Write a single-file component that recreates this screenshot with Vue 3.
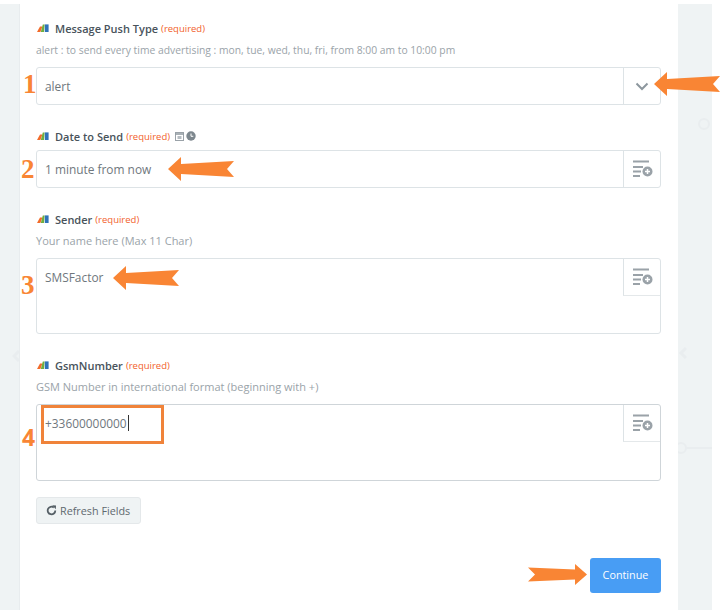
<script setup>
</script>

<template>
  <div class="page">
    <div class="backdrop">
      <span class="node node-a"></span>
      <span class="node node-b"></span>
      <span class="link"></span>
      <svg class="chev chev-l" width="8" height="12" viewBox="0 0 8 12"><path d="M7 1 2 6l5 5" fill="none" stroke="#e9edef" stroke-width="3"/></svg>
      <svg class="chev chev-r" width="9" height="12" viewBox="0 0 9 12"><path d="M8 1 3 6l5 5" fill="none" stroke="#e9edef" stroke-width="3"/></svg>
      <main class="card">
        <section class="field f1">
          <div class="label">
            <svg class="logo" viewBox="0 0 12 8"><path d="M0 8 3 2.500H5.400L3.400 8Z" fill="#f26b2a"/><path d="M3.800 8 5.800 .6H7.600L7 8Z" fill="#6fae3f"/><rect x="7.800" y=".4" width="3.800" height="7.600" fill="#2f73b8"/></svg>
            <b>Message Push Type</b><em>(required)</em>
          </div>
          <p class="help narrow">alert : to send every time advertising : mon, tue, wed, thu, fri, from 8:00 am to 10:00 pm</p>
          <div class="input single">
            <span class="value">alert</span>
            <span class="addon">
              <svg width="14" height="9" viewBox="0 0 14 9"><path d="M1.500 1.500 7 7l5.500-5.500" fill="none" stroke="#8d979e" stroke-width="2"/></svg>
            </span>
          </div>
        </section>

        <section class="field f2">
          <div class="label">
            <svg class="logo" viewBox="0 0 12 8"><path d="M0 8 3 2.500H5.400L3.400 8Z" fill="#f26b2a"/><path d="M3.800 8 5.800 .6H7.600L7 8Z" fill="#6fae3f"/><rect x="7.800" y=".4" width="3.800" height="7.600" fill="#2f73b8"/></svg>
            <b>Date to Send</b><em>(required)</em>
            <svg class="mini" width="10" height="10" viewBox="0 0 10 10"><rect x=".5" y="1.500" width="8" height="8" fill="none" stroke="#9aa2a8"/><path d="M.5 3h8" stroke="#8d979e" stroke-width="1.500"/><rect x="2.500" y="5" width="4" height="3" fill="#b5bcc1"/></svg>
            <svg class="mini clock" width="10" height="10" viewBox="0 0 10 10"><circle cx="5" cy="5" r="4.700" fill="#7d878e"/><path d="M5 2.500V5.300H7.300" fill="none" stroke="#fff"/></svg>
          </div>
          <div class="input single">
            <span class="value">1 minute from now</span>
            <span class="addon">
              <svg class="add" width="21" height="18" viewBox="0 0 21 18"><path d="M1 1.500h16M1 7h10M1 11.500h8M1 16h7" stroke="#9aa2a8" stroke-width="1.800" fill="none"/><circle cx="15.500" cy="11.500" r="5" fill="#9aa2a8"/><path d="M15.500 9v5M13 11.500h5" stroke="#fff" stroke-width="1.500"/></svg>
            </span>
          </div>
        </section>

        <section class="field f3">
          <div class="label">
            <svg class="logo" viewBox="0 0 12 8"><path d="M0 8 3 2.500H5.400L3.400 8Z" fill="#f26b2a"/><path d="M3.800 8 5.800 .6H7.600L7 8Z" fill="#6fae3f"/><rect x="7.800" y=".4" width="3.800" height="7.600" fill="#2f73b8"/></svg>
            <b>Sender</b><em>(required)</em>
          </div>
          <p class="help">Your name here (Max 11 Char)</p>
          <div class="input multi">
            <span class="value">SMSFactor</span>
            <span class="addon corner">
              <svg class="add" width="21" height="18" viewBox="0 0 21 18"><path d="M1 1.500h16M1 7h10M1 11.500h8M1 16h7" stroke="#9aa2a8" stroke-width="1.800" fill="none"/><circle cx="15.500" cy="11.500" r="5" fill="#9aa2a8"/><path d="M15.500 9v5M13 11.500h5" stroke="#fff" stroke-width="1.500"/></svg>
            </span>
          </div>
        </section>

        <section class="field f4">
          <div class="label">
            <svg class="logo" viewBox="0 0 12 8"><path d="M0 8 3 2.500H5.400L3.400 8Z" fill="#f26b2a"/><path d="M3.800 8 5.800 .6H7.600L7 8Z" fill="#6fae3f"/><rect x="7.800" y=".4" width="3.800" height="7.600" fill="#2f73b8"/></svg>
            <b>GsmNumber</b><em>(required)</em>
          </div>
          <p class="help">GSM Number in international format (beginning with +)</p>
          <div class="input multi">
            <span class="value">+33600000000<i class="caret"></i></span>
            <span class="addon corner">
              <svg class="add" width="21" height="18" viewBox="0 0 21 18"><path d="M1 1.500h16M1 7h10M1 11.500h8M1 16h7" stroke="#9aa2a8" stroke-width="1.800" fill="none"/><circle cx="15.500" cy="11.500" r="5" fill="#9aa2a8"/><path d="M15.500 9v5M13 11.500h5" stroke="#fff" stroke-width="1.500"/></svg>
            </span>
          </div>
        </section>

        <button class="refresh">
          <svg width="11" height="11" viewBox="0 0 11 11"><path d="M9.300 5.500A3.800 3.800 0 1 1 7.800 2.500" fill="none" stroke="#555f66" stroke-width="1.800"/><path d="M6.200 .3 10 .5 9.800 4.300Z" fill="#555f66"/></svg>
          Refresh Fields
        </button>

        <div class="actions"><button class="continue">Continue</button></div>
      </main>
    </div>

    <span class="num n1">1</span>
    <span class="num n2">2</span>
    <span class="num n3">3</span>
    <span class="num n4">4</span>
    <span class="highlight"></span>

    <svg class="arrow a1" width="67" height="24" viewBox="0 0 67 24"><path d="M0 12 13 0V7L66 4 59 12 66 20 13 17V24Z" fill="#f98534"/></svg>
    <svg class="arrow a2" width="67" height="24" viewBox="0 0 67 24"><path d="M0 12 13 0V7L66 4 59 12 66 20 13 17V24Z" fill="#f98534"/></svg>
    <svg class="arrow a3" width="67" height="24" viewBox="0 0 67 24"><path d="M0 12 13 0V7L66 4 59 12 66 20 13 17V24Z" fill="#f98534"/></svg>
    <svg class="arrow a4" width="59" height="21" viewBox="0 0 59 21"><path d="M59 10.500 47 0V5.500L0 3.500 7 10.500 0 17.500 47 15.500V21Z" fill="#f98534"/></svg>
  </div>
</template>

<style>
html, body { margin: 0; background: #fff; }
</style>

<style scoped>
.page { position: relative; width: 725px; height: 616px; overflow: hidden; background: #fff; font-family: "Open Sans", sans-serif; padding-top: 4px; box-sizing: border-box; }
.backdrop { position: relative; width: 712px; height: 606px; background: #eff3f4; padding: 0 34px 0 19px; box-sizing: border-box; }
.card { position: relative; height: 100%; box-sizing: border-box; background: #fff; border-left: 1px solid #e8ecee; padding: 0 17px 0 16px; display: flex; flex-direction: column; }
.node { position: absolute; width: 8px; height: 8px; border: 2px solid #e9edef; border-radius: 50%; box-sizing: content-box; }
.node-a { left: 698px; top: 114px; }
.node-b { left: 675px; top: 438px; }
.link { position: absolute; left: 685px; top: 443px; width: 27px; height: 2px; background: #e9edef; }
.chev { position: absolute; }
.chev-l { left: 12px; top: 346px; }
.chev-r { left: 678px; top: 343px; }
.field { display: flex; flex-direction: column; }
.f1 { padding-top: 16px; }
.f2 { margin-top: 23px; }
.f3 { margin-top: 23px; }
.f4 { margin-top: 23px; }
.label { display: flex; align-items: center; height: 16px; font-size: 11px; color: #48535b; }
.label b { font-weight: 600; margin-left: 6px; }
.label em { font-style: normal; font-weight: 500; font-size: 9.500px; color: #f25f2c; margin-left: 3px; }
.logo { width: 12px; height: 8px; margin-left: 1px; flex: none; }
.mini { margin-left: 5px; }
.clock { margin-left: 1px; }
.help { margin: 7px 0 9px; font-size: 11px; line-height: 14px; color: #9aa3a9; white-space: nowrap; }
.narrow { font-size: 10.330px; margin-bottom: 10px; }
.f2 .label { margin-bottom: 6px; }
.f3 .help { margin-bottom: 10px; }
.f4 .help { margin-bottom: 10px; }
.input { position: relative; display: flex; box-sizing: border-box; background: #fff; border: 1px solid #dde3e6; border-radius: 3px; font-size: 11.900px; color: #6f777d; }
.single { height: 38px; align-items: center; }
.single .value { padding-bottom: 1px; }
.multi { height: 76px; }
.f4 .multi { height: 77px; border-color: #cfd5d9; }
.value { flex: 1; padding-left: 8px; }
.multi .value { padding-top: 10px; line-height: 17px; }
.addon { width: 37px; height: 36px; flex: none; display: flex; align-items: center; justify-content: center; border-left: 1px solid #dde3e6; box-sizing: border-box; }
.corner { height: 37px; border-bottom: 1px solid #e4e8ea; }
.caret { display: inline-block; width: 1px; height: 16px; background: #333; vertical-align: -3px; margin-left: 1px; }
.refresh { align-self: flex-start; margin-top: 16px; width: 105px; height: 27px; padding: 0 9px 1px; display: flex; align-items: center; gap: 3px; box-sizing: border-box; border: 1px solid #e4e8ea; border-radius: 3px; background: #eff3f4; font: 400 10.800px "Open Sans", sans-serif; color: #60696f; white-space: nowrap; }
.actions { display: flex; justify-content: flex-end; margin-top: 34px; }
.continue { width: 71px; height: 35px; padding: 0 0 2px; border: 0; border-radius: 3px; background: #489df4; color: #fff; font: 400 10.800px "Open Sans", sans-serif; }
.num { position: absolute; font: 700 27px/28px "Liberation Serif", serif; color: #f98534; }
.n1 { left: 23px; top: 70px; }
.n2 { left: 21px; top: 155px; }
.n3 { left: 21px; top: 271px; }
.n4 { left: 22px; top: 423px; font-family: "Open Sans", sans-serif; font-size: 23px; }
.highlight { position: absolute; left: 41px; top: 405px; width: 123px; height: 39px; box-sizing: border-box; border: 3px solid #f0833a; }
.arrow { position: absolute; }
.a1 { left: 654px; top: 72px; }
.a2 { left: 168px; top: 157px; }
.a3 { left: 113px; top: 266px; }
.a4 { left: 528px; top: 564px; }
</style>
